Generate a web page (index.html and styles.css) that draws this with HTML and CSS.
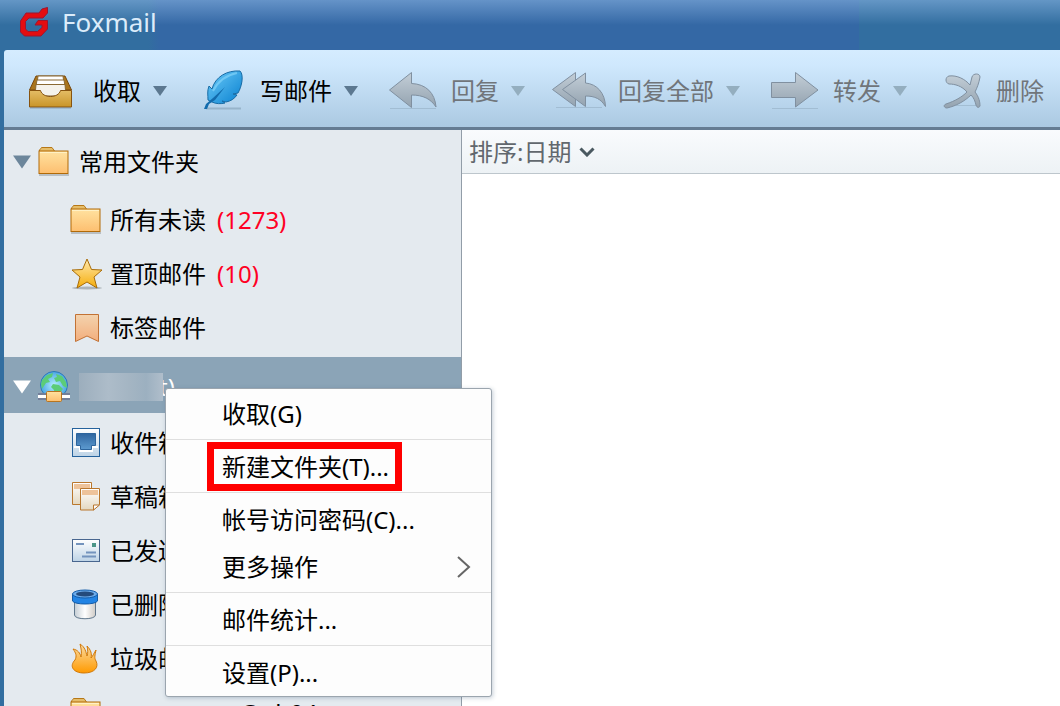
FILE: index.html
```
<!DOCTYPE html>
<html lang="zh-CN">
<head>
    <meta charset="UTF-8">
    <meta name="viewport" content="width=device-width, initial-scale=1.0">
    <title>Foxmail</title>
    <link rel="stylesheet" href="styles.css">
</head>
<body>
    <!-- Shared icons and gradients -->
    <svg class="defs" aria-hidden="true">
        <defs>
            <linearGradient id="gold" x1="0" y1="0" x2="0" y2="1">
                <stop offset="0" stop-color="#ffe2a0"/>
                <stop offset="1" stop-color="#fdbf70"/>
            </linearGradient>
            <linearGradient id="tray" x1="0" y1="0" x2="0" y2="1">
                <stop offset="0" stop-color="#e4bd66"/>
                <stop offset="1" stop-color="#c99428"/>
            </linearGradient>
            <linearGradient id="steel" x1="0" y1="0" x2="0" y2="1">
                <stop offset="0" stop-color="#c3ced7"/>
                <stop offset="1" stop-color="#94a3b0"/>
            </linearGradient>
            <linearGradient id="feather" x1="0" y1="0" x2="1" y2="1">
                <stop offset="0" stop-color="#6ccbf8"/>
                <stop offset="1" stop-color="#0880d0"/>
            </linearGradient>
            <linearGradient id="star" x1="0" y1="0" x2="0" y2="1">
                <stop offset="0" stop-color="#ffe9ae"/>
                <stop offset="1" stop-color="#f5ad0a"/>
            </linearGradient>
            <linearGradient id="ribbon" x1="0" y1="0" x2="0" y2="1">
                <stop offset="0" stop-color="#f3d3ae"/>
                <stop offset="1" stop-color="#f3ae7c"/>
            </linearGradient>
            <linearGradient id="fire" x1="0" y1="0" x2="0" y2="1">
                <stop offset="0" stop-color="#fbdca4"/>
                <stop offset="1" stop-color="#ff9a00"/>
            </linearGradient>
            <linearGradient id="paper" x1="0" y1="0" x2="0" y2="1">
                <stop offset="0" stop-color="#fff"/>
                <stop offset="1" stop-color="#e4d8c0"/>
            </linearGradient>
            <linearGradient id="ice" x1="0" y1="0" x2="0" y2="1">
                <stop offset="0" stop-color="#fff"/>
                <stop offset="1" stop-color="#bdd3e6"/>
            </linearGradient>
            <linearGradient id="deep" x1="0" y1="0" x2="0" y2="1">
                <stop offset="0" stop-color="#2f659f"/>
                <stop offset="1" stop-color="#5d9bd0"/>
            </linearGradient>
            <linearGradient id="cup" x1="0" y1="0" x2="1" y2="0">
                <stop offset="0" stop-color="#c5ced5"/>
                <stop offset=".5" stop-color="#fff"/>
                <stop offset="1" stop-color="#cfcbc6"/>
            </linearGradient>
            <radialGradient id="sea">
                <stop offset="0" stop-color="#b5edff"/>
                <stop offset="1" stop-color="#4aa6e4"/>
            </radialGradient>
        </defs>
        <symbol id="folder" viewBox="0 0 32 32">
            <path d="M1 29h30" stroke="#b9bfc3" stroke-width="2"/>
            <path d="M1.500 6V4q1-1 2-2.500H14L16.500 5v3h-15z" fill="#e5bd69" stroke="#b67818"/>
            <rect x="1" y="5" width="29" height="22.500" fill="url(#gold)" stroke="#b16a08"/>
            <path d="M2 6.500h27" stroke="#fff1c5"/>
        </symbol>
        <symbol id="caret" viewBox="0 0 14 10">
            <path d="M0 0h14L7 10z" fill="currentColor"/>
        </symbol>
    </svg>

    <header class="titlebar">
        <svg class="logo" viewBox="0 0 28 30" aria-hidden="true">
            <path d="M.5 14L6 6h13l3-4 5.500-1.500V6L23 11H9l-3.500 3.500V22L8 24.500h9.500l4.500-4V18h-7l3-4.500h9.500V22L21 29H4.500l-4-4z" fill="#e40d11" stroke="#9d1730"/>
        </svg>
        <h1>Foxmail</h1>
    </header>

    <div class="window">
        <nav class="toolbar">
            <button class="tool">
                <svg class="tool-icon" viewBox="0 0 54 48" aria-hidden="true">
                    <path d="M2.500 23L9 9h29l6.500 14z" fill="#aa751c" stroke="#76460c"/>
                    <path d="M11 9h25l1 8H10z" fill="#fff" stroke="#8a6933"/>
                    <path d="M10 13h27l1 6H9z" fill="#fff" stroke="#8a6933"/>
                    <path d="M9 17.500h29L39 29H8z" fill="#f5f2eb" stroke="#8a6933"/>
                    <path d="M2.500 23.500h11c2 8 18 8 20 0h11V40h-42z" fill="url(#tray)" stroke="#87530f"/>
                    <path d="M3 41h41" stroke="#62778a" opacity=".5"/>
                </svg>
                <span>收取</span>
                <svg class="arrow"><use href="#caret"/></svg>
            </button>
            <button class="tool">
                <svg class="tool-icon" viewBox="0 0 54 48" aria-hidden="true">
                    <path d="M12 41.500h35" stroke="#8ba8be" stroke-width="2" opacity=".7"/>
                    <path d="M14 33c0-5-1-9 1-14l3 3C21 10 33 3 46 4c4 4 2 15-2 22l-5 1 4 1c-3 4-6 6-11 7l-4-1 3 2c-4 1-9 1-13-1z" fill="url(#feather)" stroke="#176ba5"/>
                    <path d="M10 42l2-5 7-6 12-11-10 13-6 4-2 5z" fill="#126bac"/>
                    <path d="M19 24C24 14 33 8 43 6" fill="none" stroke="#8ad9fb" opacity=".6" stroke-width="2"/>
                </svg>
                <span>写邮件</span>
                <svg class="arrow"><use href="#caret"/></svg>
            </button>
            <button class="tool" disabled>
                <svg class="tool-icon" viewBox="0 0 54 48" aria-hidden="true">
                    <path d="M5 41.500h46" stroke="#8fa9bd" opacity=".5"/>
                    <path d="M4.500 23L26.500 5.500v11C41 17 50 26 51 40c-5-8-13-12-24.500-12v12.500z" fill="url(#steel)" stroke="#8090a0"/>
                </svg>
                <span>回复</span>
                <svg class="arrow"><use href="#caret"/></svg>
            </button>
            <button class="tool" disabled>
                <svg class="tool-icon" viewBox="0 0 54 48" aria-hidden="true">
                    <path d="M4 40.500h46" stroke="#8fa9bd" opacity=".5"/>
                    <path d="M.5 22.500L23.500 5.500v34z" fill="url(#steel)" stroke="#8090a0"/>
                    <path d="M10.500 22.500l23-16.500v10C45 17 53 26 53.500 39.500 49 32 43 29 33.500 29v10.500z" fill="url(#steel)" stroke="#8090a0"/>
                </svg>
                <span>回复全部</span>
                <svg class="arrow"><use href="#caret"/></svg>
            </button>
            <button class="tool" disabled>
                <svg class="tool-icon" viewBox="0 0 54 48" aria-hidden="true">
                    <path d="M5 41.500h46" stroke="#8fa9bd" opacity=".5"/>
                    <path d="M4.500 15.500h24v-10L51 23 28.500 40v-9.500h-24z" fill="url(#steel)" stroke="#8090a0"/>
                </svg>
                <span>转发</span>
                <svg class="arrow"><use href="#caret"/></svg>
            </button>
            <button class="tool" disabled>
                <svg class="tool-icon narrow" viewBox="0 0 50 48" aria-hidden="true">
                    <path d="M22 38.500h20" stroke="#8fa9bd" opacity=".5"/>
                    <path d="M15 9C23 8 31 12 36 18L38 10C39 6 46 6 46 10 45 16 43 21 41 25 45 30 46 35 46 39 45 41 43 41 42 38 41 34 40 31 37 28 31 34 22 39 13 41 10 41 9 38 12 37 21 34 28 30 33 25 28 19 21 17 15 17 11 16 11 10 15 9z" fill="url(#steel)" stroke="#8090a0"/>
                </svg>
                <span>删除</span>
            </button>
        </nav>

        <div class="content">
            <aside class="sidebar">
                <a class="group" href="#common">
                    <svg class="toggle"><use href="#caret"/></svg>
                    <svg class="icon"><use href="#folder"/></svg>
                    <span>常用文件夹</span>
                </a>
                <ul class="folders">
                    <li><a href="#unread">
                        <svg class="icon"><use href="#folder"/></svg>
                        <span>所有未读</span><span class="count">(1273)</span>
                    </a></li>
                    <li><a href="#pinned">
                        <svg class="icon" viewBox="0 0 32 32">
                            <ellipse cx="17" cy="30" rx="15" ry="1.500" fill="#adb4b9"/>
                            <path d="M17 1l4.500 10.500 10.500.5-8 7 3 11-10-6-10 6 3-11-8-7 10.500-.5z" fill="url(#star)" stroke="#a86c08" stroke-linejoin="round"/>
                        </svg>
                        <span>置顶邮件</span><span class="count">(10)</span>
                    </a></li>
                    <li><a href="#tagged">
                        <svg class="icon" viewBox="0 0 32 32">
                            <path d="M5.500 2.500h23v27L17 24 5.500 29.500z" fill="url(#ribbon)" stroke="#c27235"/>
                        </svg>
                        <span>标签邮件</span>
                    </a></li>
                </ul>

                <a class="group selected" href="#account">
                    <svg class="toggle"><use href="#caret"/></svg>
                    <svg class="icon" viewBox="0 0 32 32">
                        <circle cx="16" cy="14" r="13.500" fill="url(#sea)" stroke="#2f78b5"/>
                        <path d="M4 9l5-5 6-2-1 4-4 2 2 3-4 1-4 6-1-5zM18 3l6 2 4 6 1 6-4-2-3-5-4 1-2-4 3-1zM15 13l6 1 4 4-4 5-4 3-1-7-3-3z" fill="#5ccc78"/>
                        <path d="M0 22h32v7H0z" fill="#737f9a"/>
                        <path d="M0 24h32v3H0z" fill="#fff"/>
                        <rect x="8.500" y="20.500" width="15" height="10" rx="1" fill="url(#gold)" stroke="#b87520"/>
                    </svg>
                    <span class="masked"></span><span class="tail">t)</span>
                </a>
                <ul class="folders">
                    <li><a href="#inbox">
                        <svg class="icon" viewBox="0 0 32 32">
                            <rect x="2.500" y="1.500" width="27" height="28" fill="url(#ice)" stroke="#25629c"/>
                            <path d="M4 20h6v4h12v-4h6" fill="none" stroke="#fff" stroke-width="2"/>
                            <path d="M6.500 6.500h19v12h-4v4h-11v-4h-4z" fill="url(#deep)" stroke="#2d659d"/>
                        </svg>
                        <span>收件箱</span>
                    </a></li>
                    <li><a href="#drafts">
                        <svg class="icon" viewBox="0 0 32 32">
                            <path d="M2.500 1.500h19v22h-19z" fill="url(#paper)" stroke="#b9772d"/>
                            <path d="M4 3h16v5H4z" fill="#eec39a"/>
                            <path d="M10.500 7.500h19v16l-6 5.500h-13z" fill="url(#paper)" stroke="#b9772d"/>
                            <path d="M12 9h16v5H12z" fill="#eec39a"/>
                            <path d="M23.500 29v-5h6z" fill="#fff" stroke="#b9772d"/>
                        </svg>
                        <span>草稿箱</span>
                    </a></li>
                    <li><a href="#sent">
                        <svg class="icon" viewBox="0 0 32 32">
                            <rect x="2.500" y="4.500" width="27" height="22" fill="url(#ice)" stroke="#48668f"/>
                            <path d="M6 9h8M16 17.500h10M12 21.500h14" stroke="#7393bd" stroke-width="2"/>
                            <path d="M22 8h4v4h-4z" fill="#4a9588"/>
                        </svg>
                        <span>已发送</span>
                    </a></li>
                    <li><a href="#deleted">
                        <svg class="icon" viewBox="0 0 32 32">
                            <path d="M4.500 12v14c0 5 21 5 21 0V12z" fill="url(#cup)" stroke="#60778c"/>
                            <path d="M2.500 5v7c2 4 23 4 25 0V5z" fill="#2384e4" stroke="#145da9"/>
                            <ellipse cx="15" cy="5" rx="12.500" ry="4" fill="#6daceb" stroke="#145da9"/>
                            <ellipse cx="15" cy="5" rx="9" ry="2.500" fill="#244b7c"/>
                        </svg>
                        <span>已删除</span>
                    </a></li>
                    <li><a href="#junk">
                        <svg class="icon" viewBox="0 0 32 32">
                            <path d="M5 17c2-4 1-7-2-11 5 1 7 4 8 8 1-5 0-9-1-13 5 3 6 8 7 12 1-3 1-6 0-10 4 4 5 8 4 12 2-2 3-5 5-8-1 5-2 8 0 11 3 6-1 12-12 12S-1 23 5 17z" fill="url(#fire)" stroke="#d17908"/>
                        </svg>
                        <span>垃圾邮件</span>
                    </a></li>
                    <li><a href="#postmaster">
                        <svg class="icon"><use href="#folder"/></svg>
                        <span>postmaster@qb04</span>
                    </a></li>
                </ul>
            </aside>

            <main class="mail-list">
                <div class="sortbar">
                    <button class="sort">
                        <span>排序:日期</span>
                        <svg class="chevron" viewBox="0 0 16 10" aria-hidden="true">
                            <path d="M1.500 1.500L8 8l6.500-6.500" fill="none" stroke="#4a5960" stroke-width="3"/>
                        </svg>
                    </button>
                </div>
            </main>
        </div>
    </div>

    <!-- Account context menu -->
    <div class="menu">
        <div class="menu-group">
            <button class="menu-item">收取(G)</button>
        </div>
        <div class="menu-group">
            <button class="menu-item"><span class="highlight">新建文件夹(T)...</span></button>
        </div>
        <div class="menu-group">
            <button class="menu-item">帐号访问密码(C)...</button>
            <button class="menu-item">更多操作
                <svg class="more" viewBox="0 0 14 24" aria-hidden="true">
                    <path d="M1 2l11 10L1 22" fill="none" stroke="#666" stroke-width="2"/>
                </svg>
            </button>
        </div>
        <div class="menu-group">
            <button class="menu-item">邮件统计...</button>
        </div>
        <div class="menu-group">
            <button class="menu-item">设置(P)...</button>
        </div>
    </div>
</body>
</html>
```
FILE: styles.css
```
* {
    box-sizing: border-box;
}
body {
    margin: 0;
    height: 100vh;
    display: flex;
    flex-direction: column;
    overflow: hidden;
    font-family: "Noto Sans", "Noto Sans CJK SC", sans-serif;
    font-size: 24px;
    line-height: 36px;
    color: #000;
    background: #326ea0;
}
button {
    font: inherit;
    color: inherit;
    background: none;
    border: 0;
    padding: 0;
    cursor: pointer;
}
a {
    color: inherit;
    text-decoration: none;
}
svg {
    display: block;
    flex: none;
}
.defs {
    position: absolute;
    width: 0;
    height: 0;
}

/* Title bar */
.titlebar {
    flex: none;
    display: flex;
    align-items: center;
    gap: 14px;
    height: 50px;
    padding: 0 20px 6px;
    background: linear-gradient(rgba(150, 190, 235, 0.5), rgba(150, 190, 235, 0) 25px),
        linear-gradient(to right, #326ea0 14%, #3468a5 15%, #3468a5 81%, #326ea0 81%);
}
.titlebar h1 {
    margin: 0;
    font-size: 26px;
    font-weight: 400;
    color: #dcecfa;
}
.logo {
    width: 28px;
    height: 30px;
}
.window {
    flex: 1;
    min-height: 0;
    display: flex;
    flex-direction: column;
    margin-left: 4px;
}

/* Toolbar */
.toolbar {
    flex: none;
    display: flex;
    align-items: center;
    gap: 27px;
    height: 80px;
    padding: 4px 0 0 23px;
    overflow: hidden;
    border-bottom: 3px solid #657c93;
    border-top-left-radius: 3px;
    background: linear-gradient(#d5ecff, #cfe8fd 20%, #abc9e2);
}
.tool {
    flex: none;
    display: flex;
    align-items: center;
    gap: 12px;
    white-space: nowrap;
}
.tool:disabled {
    color: #70757a;
}
.tool-icon {
    width: 54px;
    height: 48px;
}
.tool-icon.narrow {
    width: 50px;
}
.arrow {
    width: 14px;
    height: 10px;
    color: #5c7890;
}
.tool:disabled .arrow {
    color: #94aebf;
}

/* Folder tree */
.content {
    flex: 1;
    min-height: 0;
    display: flex;
}
.sidebar {
    flex: none;
    width: 458px;
    padding-top: 4px;
    overflow: hidden;
    border-right: 1px solid #929da8;
    background: #e4eaef;
}
.group {
    display: flex;
    align-items: center;
    height: 56px;
    padding-left: 9px;
}
.group .icon {
    margin: 0 9px 0 7px;
}
.toggle {
    width: 18px;
    height: 14px;
    color: #6c869b;
}
.icon {
    width: 32px;
    height: 32px;
}
.folders {
    list-style: none;
    margin: 0;
    padding: 2px 0 3px;
}
.folders a {
    display: flex;
    align-items: center;
    gap: 8px;
    height: 54px;
    padding: 1px 0 0 66px;
    white-space: nowrap;
}
.count {
    margin-left: 3px;
    color: #ff0024;
}
.selected {
    padding-top: 3px;
    color: #fff;
    background: #8ba4b7;
}
.selected .toggle {
    color: #fff;
}
.masked {
    z-index: 1;
    width: 84px;
    height: 28px;
    background: linear-gradient(to right, #9caebd, #adbcc9 35%, #a4b5c3 60%, #9cb0c0 80%, #b0becb);
}
.tail {
    margin-left: -4px;
}

/* Mail list */
.mail-list {
    flex: 1;
    min-width: 0;
    background: #fff;
}
.sortbar {
    display: flex;
    height: 44px;
    padding-left: 7px;
    border-bottom: 1px solid #bdc6cc;
    background: linear-gradient(#f9fbfd, #edf2f5);
}
.sort {
    display: flex;
    align-items: center;
    gap: 8px;
    color: #62686e;
}
.chevron {
    width: 16px;
    height: 10px;
}

/* Context menu */
.menu {
    position: absolute;
    left: 165px;
    top: 388px;
    width: 327px;
    border: 1px solid #9ba5ae;
    border-radius: 3px;
    background: #fdfdfd;
    box-shadow: 1px 1px 4px rgba(60, 90, 120, 0.3);
}
.menu-group {
    padding: 3px 0 2px;
    border-bottom: 1px solid #dfdfdf;
}
.menu-group:first-child {
    padding-top: 1px;
}
.menu-group:last-child {
    padding-bottom: 0;
    border-bottom: 0;
}
.menu-item {
    display: flex;
    align-items: center;
    justify-content: space-between;
    width: 100%;
    height: 47px;
    padding: 0 20px 0 56px;
    text-align: left;
    white-space: nowrap;
}
.highlight {
    height: 49px;
    margin-left: -15px;
    padding: 0 6px 0 8px;
    border: 7px solid #ff0000;
}
.more {
    width: 14px;
    height: 24px;
}
```
